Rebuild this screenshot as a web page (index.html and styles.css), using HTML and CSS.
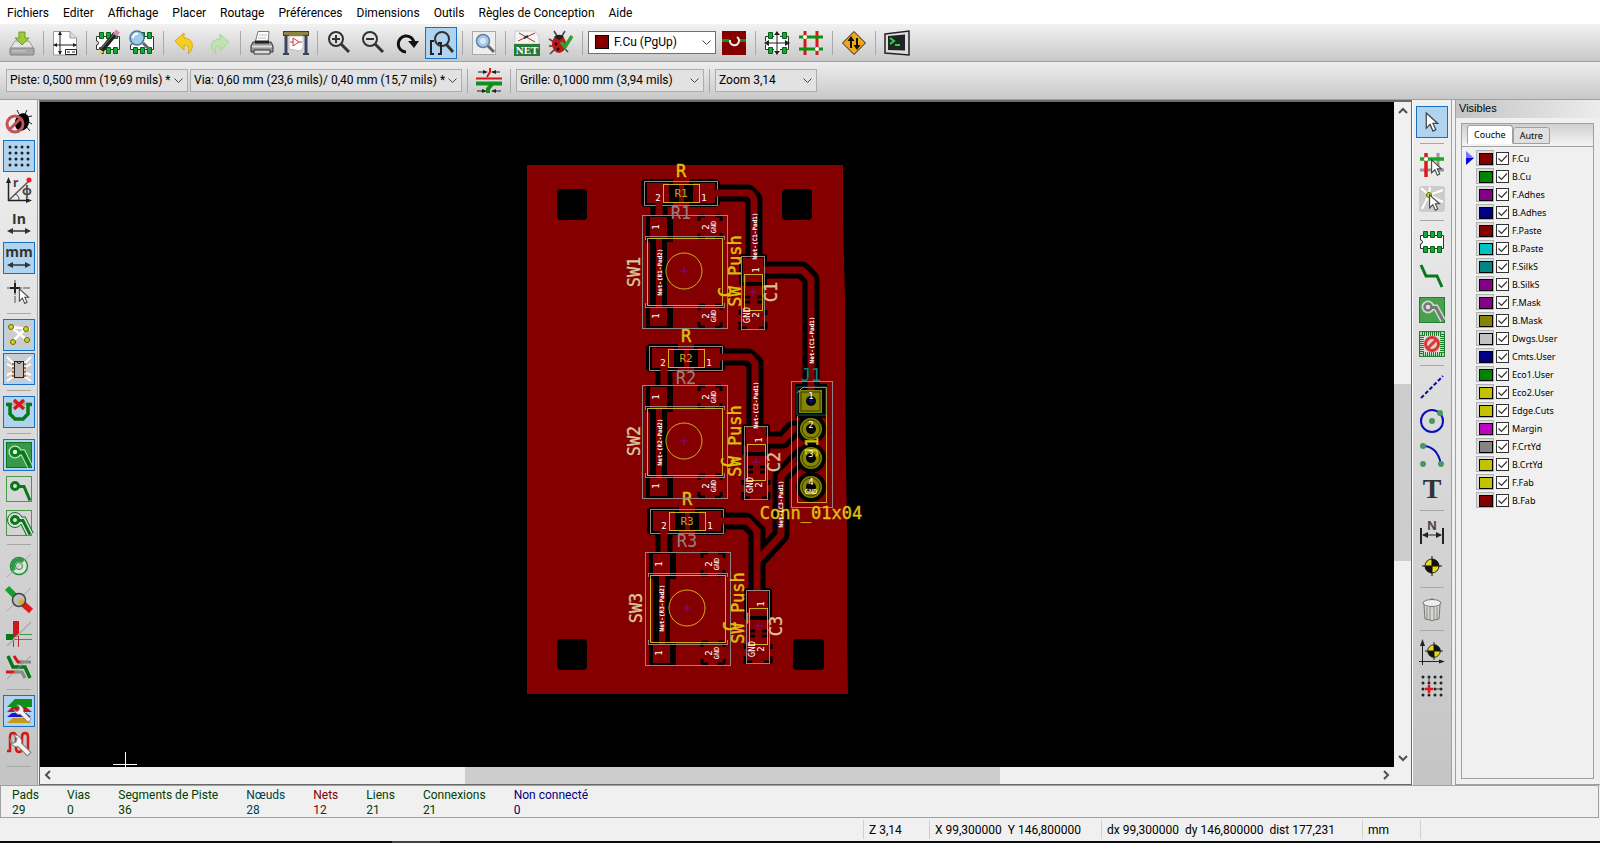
FILE: index.html
```html
<!DOCTYPE html>
<html lang="fr">
<head>
  <meta charset="UTF-8">
  <title>Pcbnew</title>
  <link rel="stylesheet" href="styles.css">
</head>
<body>
  <!-- shared shapes -->
  <svg class="defs" aria-hidden="true">
    <symbol id="i-cursor" viewBox="0 0 16 22"><path d="M2 1V17L6 13L9 20L12 18.500L9 12H14Z" fill="#fff" stroke="#444" stroke-width="1.300"/></symbol>
    <symbol id="i-chip" viewBox="0 0 26 26"><path d="M1.500 6.500H24.500V19.500H1.500V15a2 2 0 0 0 0-4Z" fill="#fff" stroke="#333"/><path d="M4.500 2.500h4v6h-4zM11.500 2.500h4v6h-4zM18.500 2.500h4v6h-4zM4.500 17.500h4v6h-4zM11.500 17.500h4v6h-4zM18.500 17.500h4v6h-4z" fill="#18a838" stroke="#086018"/></symbol>
    <symbol id="i-target" viewBox="0 0 20 20"><circle cx="10" cy="10" r="7" fill="#e4dc10" stroke="#222"/><path d="M10 10V3A7 7 0 0 1 17 10ZM10 10V17A7 7 0 0 1 3 10Z" fill="#111"/><path d="M10 0V20M0 10H20" stroke="#111"/></symbol>
    <symbol id="i-wrench" viewBox="0 0 20 20"><path d="M1 5a6 6 0 0 0 7 6l8 8 3-3-8-8a6 6 0 0 0-7-7l3 3-1 3-3 1Z" fill="#f2f2f2" stroke="#888"/></symbol>
    <symbol id="i-lens" viewBox="0 0 26 26"><path d="M14 14l8 8" stroke="#333" stroke-width="3"/><circle cx="9" cy="9" r="7" fill="none" stroke="#333" stroke-width="2"/></symbol>
  </svg>

  <nav class="menubar">
    <a href="#">Fichiers</a>
    <a href="#">Editer</a>
    <a href="#">Affichage</a>
    <a href="#">Placer</a>
    <a href="#">Routage</a>
    <a href="#">Préférences</a>
    <a href="#">Dimensions</a>
    <a href="#">Outils</a>
    <a href="#">Règles de Conception</a>
    <a href="#">Aide</a>
  </nav>

  <div class="toolbar toolbar-main">
    <button class="tool" aria-label="Sauver"><svg viewBox="0 0 26 26"><path d="M6 11H20L25 19H1Z" fill="#e4e4e4" stroke="#999"/><rect x="1" y="18" width="24" height="7" rx="1" fill="#a8a8a8" stroke="#808080"/><path d="M3 21h14" stroke="#ccc"/><path d="M10 2h6v6h4l-7 7-7-7h4z" fill="#9ccc3c" stroke="#6c9c20"/></svg></button>
    <i class="sep"></i>
    <button class="tool" aria-label="Page"><svg viewBox="0 0 26 26"><path d="M1.500 1.500H18L24.500 8V25H1.500Z" fill="#fff" stroke="#999"/><path d="M18 1.500V8H24.500" fill="#ddd" stroke="#999"/><path d="M8 2V24M2 15H24" stroke="#222"/><path d="M8 1l-2 4h4zM8 25l-2-4h4zM1 15l4-2v4zM25 15l-4-2v4z" fill="#222"/><path d="M13.500 19.500h11v5h-11z" fill="#fff" stroke="#222"/><path d="M15 22h3m2 0h3" stroke="#222"/></svg></button>
    <i class="sep"></i>
    <button class="tool" aria-label="Editeur d'empreintes"><svg viewBox="0 0 26 26"><use href="#i-chip"/><path d="M6 21L20 4" stroke="#222" stroke-width="5"/><path d="M20 5l3-4" stroke="#d888b0" stroke-width="5"/><path d="M4 25l0-6 5 3z" fill="#f0d060"/><path d="M6 19l13-15" stroke="#777"/></svg></button>
    <button class="tool" aria-label="Visualisateur d'empreintes"><svg viewBox="0 0 26 26"><use href="#i-chip"/><circle cx="8" cy="8" r="7" fill="#9ccce8" stroke="#4c7898" stroke-width="1.500"/><path d="M4 8a4 4 0 0 1 5-4" stroke="#fff" stroke-width="2" fill="none"/><path d="M14 13l6 6" stroke="#666" stroke-width="3"/></svg></button>
    <i class="sep"></i>
    <button class="tool" aria-label="Annuler"><svg viewBox="0 0 26 26"><path d="M12 3v5c8 0 12 9 4 16 2-7 0-9-4-9v5L3 11Z" fill="#f4d020" stroke="#d8a810"/></svg></button>
    <button class="tool" aria-label="Refaire"><svg viewBox="0 0 26 26"><path d="M14 4v5c-8 0-12 8-4 15-2-7 0-8 4-8v5l9-9Z" fill="#c0e4b0" stroke="#a8d498"/></svg></button>
    <i class="sep"></i>
    <button class="tool" aria-label="Imprimer"><svg viewBox="0 0 26 26"><path d="M6 13L9 1.500h11L19 13Z" fill="#fff" stroke="#777"/><path d="M10 5h8M9 8h8" stroke="#bbb"/><path d="M4 12H22L24 16V22H2V16Z" fill="#999" stroke="#333"/><path d="M6 12H20" stroke="#222" stroke-width="3"/><path d="M3 16.500H23" stroke="#ddd" stroke-width="2"/><path d="M5 20H21V24H5Z" fill="#ddd" stroke="#333"/></svg></button>
    <button class="tool" aria-label="Tracer"><svg viewBox="0 0 26 26"><path d="M3 4V24M23 4V24" stroke="#384460" stroke-width="3"/><path d="M0 24h6M20 24h6" stroke="#384460" stroke-width="2"/><rect x=".5" y="1.500" width="25" height="4" fill="#8c8440" stroke="#444020"/><path d="M6 6H20V18L17 21L6 19Z" fill="#fff" stroke="#bbb"/><path d="M10 8l6 4-6 4z" fill="none" stroke="#c83838"/><path d="M7 12h3m6 0h3" stroke="#c83838"/></svg></button>
    <i class="sep"></i>
    <button class="tool" aria-label="Zoom +"><svg viewBox="0 0 26 26"><use href="#i-lens" x="1" y="0" width="26" height="26"/><path d="M6 9h8M10 5v8" stroke="#333" stroke-width="2"/></svg></button>
    <button class="tool" aria-label="Zoom -"><svg viewBox="0 0 26 26"><use href="#i-lens" x="1" y="0" width="26" height="26"/><path d="M6 9h8" stroke="#333" stroke-width="2"/></svg></button>
    <button class="tool" aria-label="Redessiner"><svg viewBox="0 0 26 26"><path d="M12 22A8 8 0 1 1 20 12" fill="none" stroke="#111" stroke-width="3"/><path d="M14 11H25L20 18Z" fill="#111"/></svg></button>
    <button class="tool on" aria-label="Zoom automatique"><svg viewBox="0 0 26 26"><circle cx="14" cy="9" r="7" fill="none" stroke="#333" stroke-width="2"/><path d="M18 14l7 8" stroke="#333" stroke-width="3"/><path d="M6 11H3V24H6M10 13h3V24H10" fill="none" stroke="#222" stroke-width="2"/></svg></button>
    <i class="sep"></i>
    <button class="tool" aria-label="Chercher"><svg viewBox="0 0 26 26"><rect x="1.500" y="1.500" width="23" height="23" fill="#eee" stroke="#aaa"/><circle cx="12" cy="11" r="6.500" fill="#a8c8e8" stroke="#6080a8" stroke-width="1.500"/><circle cx="12" cy="11" r="3" fill="#d8e8f8"/><path d="M17 16l6 6" stroke="#666" stroke-width="3"/></svg></button>
    <i class="sep"></i>
    <button class="tool" aria-label="Netliste"><svg viewBox="0 0 26 26"><path d="M1 1H20L25 6V14H1Z" fill="#f4f4f4" stroke="#ccc"/><path d="M5 3l16 9M4 11L21 3" stroke="#a03028"/><path d="M10 8l4-2" stroke="#333" stroke-width="2"/><rect y="14" width="26" height="12" fill="#287838"/><text class="net-label" x="13" y="24" text-anchor="middle">NET</text></svg></button>
    <button class="tool" aria-label="Test des règles"><svg viewBox="0 0 26 26"><path d="M6 1l3 5M17 1l-3 5M1 9l5 3M1 16h5M2 24l5-5M20 22l-4-4" stroke="#444" stroke-width="1.500"/><ellipse cx="11" cy="14" rx="7" ry="9" fill="#c01818"/><path d="M6 7a6 5 0 0 1 10 0l-5 3Z" fill="#222"/><circle cx="8" cy="14" r="1.500"/><circle cx="10" cy="19" r="1.500"/><path d="M13 12l4 5 7-11" fill="none" stroke="#30a030" stroke-width="3.500"/></svg></button>
    <i class="sep"></i>
    <div class="combo combo-layer">
      <i class="combo-swatch"></i>
      <select aria-label="Couche active"><option>F.Cu (PgUp)</option></select>
    </div>
    <button class="tool" aria-label="Paire de couches"><svg viewBox="0 0 26 26"><rect x="1" y="1" width="24" height="24" fill="#840000"/><path d="M1 10.500h7M18 10.500h7" stroke="#189018" stroke-width="3"/><path d="M9 10a4.500 4.500 0 1 0 7-3" fill="none" stroke="#eee" stroke-width="2"/></svg></button>
    <i class="sep"></i>
    <button class="tool" aria-label="Mode module"><svg viewBox="0 0 26 26"><use href="#i-chip"/><rect x="2" y="9" width="22" height="8" fill="#fff"/><rect x="10" y="2" width="6" height="22" fill="#fff"/><path d="M13 3V23M2 13H24" stroke="#222"/><path d="M13 1l-3 4h6zM13 25l-3-4h6zM0 13l5-3v6zM26 13l-5-3v6z" fill="#222"/></svg></button>
    <button class="tool" aria-label="Mode piste"><svg viewBox="0 0 26 26"><path d="M7 1V25M19 1V25" stroke="#d81818" stroke-width="3"/><path d="M1 7H25M1 19H25" stroke="#109010" stroke-width="3"/><circle cx="7" cy="7" r="2" fill="#fff"/><circle cx="19" cy="19" r="2" fill="#fff"/></svg></button>
    <i class="sep"></i>
    <button class="tool" aria-label="FreeRoute"><svg viewBox="0 0 26 26"><path d="M13 1.500L24.500 13 13 24.500 1.500 13Z" fill="#f0a818" stroke="#222" stroke-linejoin="round"/><path d="M10 18V10M16 8V16" stroke="#111" stroke-width="2"/><path d="M10 6l-3.500 5h7zM16 20l-3.500-5h7z" fill="#111"/></svg></button>
    <i class="sep"></i>
    <button class="tool" aria-label="Console Python"><svg viewBox="0 0 26 26"><path d="M1 4L25 1V25L1 23Z" fill="#ddd" stroke="#222" stroke-width="1.500"/><path d="M4 6L21 4.500V20.500L4 20Z" fill="#1c2424"/><path d="M6 8l4 3-4 3M11 15h5" fill="none" stroke="#30d050" stroke-width="2"/></svg></button>
  </div>

  <div class="toolbar toolbar-aux">
    <div class="combo combo-track"><select aria-label="Piste"><option>Piste: 0,500 mm (19,69 mils) *</option></select></div>
    <div class="combo combo-via"><select aria-label="Via"><option>Via: 0,60 mm (23,6 mils)/ 0,40 mm (15,7 mils) *</option></select></div>
    <i class="sep"></i>
    <button class="tool" aria-label="Largeur automatique"><svg viewBox="0 0 26 26"><path d="M0 10.500H26" stroke="#d01818" stroke-width="2"/><path d="M0 15.500H26" stroke="#109018" stroke-width="4"/><path d="M14 0v4l-3 5" fill="none" stroke="#d01818" stroke-width="2"/><path d="M12 25v-4l4-5" fill="none" stroke="#109018" stroke-width="4"/><path d="M2 4h8M16 4h8M1 23h8M17 23h8" stroke="#222"/><path d="M12 4L7 2v4zM15 4l5-2v4zM11 23l-5-2v4zM15 23l5-2v4z" fill="#222"/></svg></button>
    <i class="sep"></i>
    <div class="combo combo-grid"><select aria-label="Grille"><option>Grille: 0,1000 mm (3,94 mils)</option></select></div>
    <i class="sep"></i>
    <div class="combo combo-zoom"><select aria-label="Zoom"><option>Zoom 3,14</option></select></div>
  </div>

  <main class="workspace">
    <div class="toolbar toolbar-side">
      <button class="tool" aria-label="DRC désactivé"><svg viewBox="0 0 26 26"><path d="M11 1l2 4M21 1l-2 4M20 8l6-1M21 12l5 3M20 17l4 5" stroke="#222"/><ellipse cx="16" cy="13" rx="7" ry="9" transform="rotate(20 16 13)"/><circle cx="9" cy="15" r="8" fill="none" stroke="#c85058" stroke-width="3"/><path d="M4 20L14 10" stroke="#c85058" stroke-width="3"/></svg></button>
      <button class="tool on" aria-label="Grille"><svg viewBox="0 0 26 26"><path d="M4 4h20M4 10h20M4 16h20M4 22h20" stroke="#222" stroke-width="3" stroke-linecap="round" stroke-dasharray="0 6"/></svg></button>
      <button class="tool" aria-label="Coordonnées polaires"><svg viewBox="0 0 26 26"><path d="M2.500 24V3M2 23.500H23" stroke="#222" stroke-width="1.500"/><path d="M2.500 0L0 6h5zM26 23.500L20 21v5z" fill="#222"/><path d="M3 23L23 4" stroke="#555" stroke-width="1.500"/><path d="M9 17a6 6 0 0 1 4 6" fill="none" stroke="#444"/><circle cx="23" cy="3" r="2.500" fill="#f01828"/><text class="glyph" x="7" y="10">r</text><text class="glyph" x="16" y="18">φ</text></svg></button>
      <button class="tool" aria-label="Pouces"><svg viewBox="0 0 26 26"><text class="unit" x="13" y="13" text-anchor="middle">In</text><path d="M3 20H23" stroke="#333" stroke-width="1.500"/><path d="M1 20l6-3v6zM25 20l-6-3v6z" fill="#333"/></svg></button>
      <button class="tool on" aria-label="Millimètres"><svg viewBox="0 0 26 26"><text class="unit" x="13" y="12" text-anchor="middle">mm</text><path d="M3 20H23" stroke="#333" stroke-width="1.500"/><path d="M1 20l6-3v6zM25 20l-6-3v6z" fill="#333"/></svg></button>
      <button class="tool" aria-label="Curseur"><svg viewBox="0 0 26 26"><path d="M9 1V25M1 9H25" stroke="#999" stroke-width="2" stroke-dasharray="7 1"/><path d="M9 4V14M4 9H14" stroke="#222" stroke-width="2"/><use href="#i-cursor" x="11" y="9" width="14" height="17"/></svg></button>
      <i class="sep"></i>
      <button class="tool on" aria-label="Chevelu"><svg viewBox="0 0 26 26"><rect width="26" height="26" fill="#ccc"/><path d="M5 5L24 7M5 5L21 18M20 6L6 20" stroke="#fff" stroke-width="2.500"/><g fill="#c8d820" stroke="#606810"><circle cx="5" cy="5" r="2.500"/><circle cx="20" cy="7" r="2.500"/><circle cx="21" cy="18" r="2.500"/><circle cx="7" cy="20" r="2.500"/></g></svg></button>
      <button class="tool on" aria-label="Chevelu du module"><svg viewBox="0 0 26 26"><rect width="26" height="26" fill="#ccc"/><path d="M8 8L1 1M8 12L1 8M8 16L1 19M8 20L1 25M18 8L25 1M18 12L25 8M18 16L25 19M18 20L25 25" stroke="#fff" stroke-width="2"/><path d="M6 8h14M6 12h14M6 16h14M6 20h14" stroke="#b87040" stroke-width="2"/><rect x="8.500" y="5.500" width="9" height="16" fill="#bbb" stroke="#222"/><path d="M11 5.500a2 2 0 0 0 4 0" fill="none" stroke="#222"/></svg></button>
      <i class="sep"></i>
      <button class="tool on" aria-label="Effacement automatique"><svg viewBox="0 0 26 26"><path d="M1 5H25" stroke="#aaa" stroke-width="3"/><path d="M0 5.500H4V15l5 5h8l5-5V5.500h4" fill="none" stroke="#087818" stroke-width="3.500"/><path d="M8 1l10 9M18 1L8 10" stroke="#d81818" stroke-width="3.500"/></svg></button>
      <i class="sep"></i>
      <button class="tool on" aria-label="Zones remplies"><svg viewBox="0 0 26 26"><rect x=".5" y=".5" width="25" height="25" fill="#389848" stroke="#087818"/><path d="M9 10.500h8l7 14" fill="none" stroke="#e0f0e0" stroke-width="6"/><circle cx="9" cy="10" r="6.500" fill="#e0f0e0"/><path d="M9 10.500h8l7 14" fill="none" stroke="#389848" stroke-width="4.500"/><circle cx="9" cy="10" r="5.500" fill="#389848"/><path d="M9 10.500h8l7 14" fill="none" stroke="#087818" stroke-width="3"/><circle cx="9" cy="10" r="3.500" fill="#e0f0e0" stroke="#087818" stroke-width="2.500"/></svg></button>
      <button class="tool" aria-label="Zones vides"><svg viewBox="0 0 26 26"><rect x=".5" y=".5" width="25" height="25" fill="none" stroke="#489848"/><path d="M9 10.500h9l6 14" fill="none" stroke="#087818" stroke-width="3"/><circle cx="9" cy="10" r="3.500" fill="#ddd" stroke="#087818" stroke-width="3"/></svg></button>
      <button class="tool" aria-label="Contours des zones"><svg viewBox="0 0 26 26"><rect x=".5" y=".5" width="25" height="25" fill="none" stroke="#489848"/><path d="M9 10.500h8l7 14" fill="none" stroke="#087818" stroke-width="8"/><circle cx="9" cy="10" r="7.500" fill="#ddd" stroke="#087818"/><path d="M9 10.500h8l7 14" fill="none" stroke="#ddd" stroke-width="6"/><path d="M9 10.500h8l7 14" fill="none" stroke="#087818" stroke-width="3"/><circle cx="9" cy="10" r="3.500" fill="#ddd" stroke="#087818" stroke-width="3"/></svg></button>
      <i class="sep"></i>
      <button class="tool" aria-label="Pastilles en contour"><svg viewBox="0 0 26 26"><circle cx="13" cy="13" r="8.500" fill="#d8e8d8" stroke="#208838" stroke-width="1.500"/><path d="M7 19A8.500 8.500 0 0 1 19 7L16 10A4 4 0 0 0 10 16Z" fill="#309848"/><circle cx="13" cy="13" r="3.500" fill="#ddd" stroke="#208838"/><path d="M1 24L25 1" stroke="#aaa"/></svg></button>
      <button class="tool" aria-label="Vias en contour"><svg viewBox="0 0 26 26"><path d="M1 1L9 9" stroke="#18a028" stroke-width="6"/><path d="M14 14L25 24" stroke="#e01818" stroke-width="6"/><path d="M1 24L25 1" stroke="#aaa"/><circle cx="13" cy="13" r="6.500" fill="#bbb" fill-opacity=".8" stroke="#444" stroke-width="1.500"/><circle cx="15" cy="15" r="2.500" fill="#d8b018"/></svg></button>
      <button class="tool" aria-label="Pistes en contour"><svg viewBox="0 0 26 26"><path d="M0 16h7" stroke="#087818" stroke-width="6"/><path d="M7 13.500h19M7 18.500h19" stroke="#389848"/><path d="M10 0V16" stroke="#d01818" stroke-width="6"/><path d="M7.500 16v10M12.500 16v10" stroke="#c02828"/><path d="M1 25L25 1" stroke="#aaa" stroke-width="1.500"/></svg></button>
      <button class="tool" aria-label="Haut contraste"><svg viewBox="0 0 26 26"><path d="M8 1l4 6h4" fill="none" stroke="#d01818" stroke-width="3"/><path d="M14 7h11M9 17h7l3 6" fill="none" stroke="#888" stroke-width="3"/><path d="M0 17h9" stroke="#d01818" stroke-width="3"/><path d="M2 1l5 11h12l5 11" fill="none" stroke="#087818" stroke-width="3.500"/><path d="M1 24L25 1" stroke="#999"/></svg></button>
      <i class="sep"></i>
      <button class="tool on" aria-label="Gestionnaire des couches"><svg viewBox="0 0 26 26"><path d="M7 20h13l5 5H1z" fill="#c89818"/><path d="M6 15h14l5 4H1z" fill="#1818d0"/><path d="M6 9h14l6 5H1z" fill="#c01828"/><path d="M9 1h17V9H1z" fill="#109018"/><use href="#i-wrench" x="7" y="5" width="19" height="21"/></svg></button>
      <button class="tool" aria-label="Outils micro-ondes"><svg viewBox="0 0 26 26"><path d="M1 19h3V5q0-4 3-4t3 4V16q0 4 3 4t3-4V5q0-4 3-4t3 4V19" fill="none" stroke="#d01818" stroke-width="2.500"/><use href="#i-wrench" x="3" y="2" width="23" height="23"/></svg></button>
      <i class="sep"></i>
    </div>

    <section class="view">
      <div class="view-row">
        <svg class="board" viewBox="40 102 1354 665" role="img" aria-label="Circuit imprimé">
          <defs>
            <g id="fp-r">
              <path class="gap" d="M-40-11l3-3h29v28h-29l-3-3zM8-14h27l4 3v22l-4 3H8z"/>
              <path class="cu" d="M-34-10h22v20h-22zM12-10h22v20H12z"/>
              <path class="gap" d="M-9-9h7v18h-7zM3-9h6v18H3z"/>
              <rect class="crtyd" x="-37" y="-12" width="73" height="24"/>
              <rect class="fab" x="-18" y="-9" width="36" height="18"/>
              <text class="value" x="0" y="-16">R</text>
              <text class="pad" x="-23" y="8">2</text>
              <text class="pad" x="23" y="8">1</text>
            </g>
            <g id="fp-sw">
              <path class="gap" d="M-38-55h27v26h-27zM-38 34h27v23h-27z"/>
              <path class="gap" d="M-34-34h17v72h-17z"/>
              <path class="cu" d="M-34-54h17v21h-17zM-34 36h17v19h-17zM-28-34h6v72h-6z"/>
              <path class="relief" d="M15-55h6M31-55h6M15-33h6M31-33h6M15-50v-5M15-38v5M37-50v-5M37-38v5M15 34h6M31 34h6M15 56h6M31 56h6M15 39v-5M15 51v5M37 39v-5M37 51v5"/>
              <rect class="crtyd" x="-42" y="-56" width="85" height="113"/>
              <path class="crtyd" d="M-39-31v-4H40v4M-39 32v4H40v-4"/>
              <rect class="fab" x="-37" y="-33" width="75" height="67"/>
              <circle class="fab" r="18"/>
              <path class="anchor" d="M-4 0H4M0-4V4"/>
              <g transform="rotate(-90)">
                <text class="value" x="0" y="57">SW_Push</text>
                <text class="pad" x="44" y="-25">1</text>
                <text class="pad" x="-45" y="-25">1</text>
                <text class="pad" x="44" y="25">2</text>
                <text class="pad" x="-45" y="25">2</text>
                <text class="gnd" x="44" y="32">GND</text>
                <text class="gnd" x="-45" y="32">GND</text>
              </g>
            </g>
            <g id="fp-c-cu">
              <rect class="gap" x="-14" y="-38" width="28" height="32" rx="3"/>
              <rect class="cu" x="-10" y="-35" width="20" height="25"/>
              <path class="relief" d="M-9 5h6M4 5h6M-9 10h6M4 10h6M-13 30v6h7M13 30v6H6M-13 18v5M13 18v5"/>
            </g>
            <g id="fp-c">
              <rect class="crtyd" x="-12" y="-36" width="23" height="73"/>
              <rect class="fab" x="-9" y="-18" width="18" height="36"/>
              <path class="anchor" d="M-4 0H4M0-4V4"/>
              <g transform="rotate(-90)">
                <text class="value" x="0" y="-22">C</text>
                <text class="pad" x="22" y="6">1</text>
                <text class="pad" x="-23" y="6">2</text>
                <text class="pad" x="-23" y="-3">GND</text>
              </g>
            </g>
            <g id="pad-round"><circle class="gap" r="15"/><circle class="hole-pad" r="11"/><circle class="ring" r="9"/><circle class="gap" r="5"/></g>
          </defs>

          <path class="cu" d="M527 165H843V220L845 300V400L847 530V640L848 694H527Z"/>
          <g class="gap">
            <rect x="557" y="189" width="30" height="31" rx="4"/>
            <rect x="782" y="189" width="30" height="31" rx="4"/>
            <rect x="557" y="639" width="30" height="31" rx="4"/>
            <rect x="793" y="639" width="31" height="31" rx="4"/>
          </g>

          <use href="#fp-r" x="681" y="193"/>
          <use href="#fp-r" x="686" y="358"/>
          <use href="#fp-r" x="687" y="521"/>
          <rect class="gap" x="795" y="384" width="32" height="34"/>

          <use href="#fp-c-cu" x="753" y="292"/>
          <use href="#fp-c-cu" x="756" y="462"/>
          <use href="#fp-c-cu" x="758" y="626"/>
          <g class="clearance">
            <path d="M718 193H748L754 199V258"/>
            <path d="M766 270H802L811 279V395"/>
            <path d="M723 357H748L755 363V425"/>
            <path d="M769 440H783L793 429H811"/>
            <path d="M811 455H802L781 476V535L757 561"/>
            <path d="M724 521H746L757 531V590"/>
            <path d="M659 206V222M664 371V390M664 534V556"/>
          </g>
          <g class="track">
            <path d="M712 193H750L754 199V266"/>
            <path d="M755 270H802L811 279V400"/>
            <path d="M716 357H750L755 363V432"/>
            <path d="M758 440H783L793 429H811"/>
            <path d="M811 455H802L781 476V535L757 561"/>
            <path d="M717 521H748L757 531V600"/>
            <path d="M659 203V226M664 368V394M664 531V560"/>
          </g>

          <use href="#fp-sw" x="684" y="271"/>
          <use href="#fp-sw" x="684" y="441"/>
          <use href="#fp-sw" x="687" y="608"/>
          <use href="#fp-c" x="753" y="292"/>
          <use href="#fp-c" x="756" y="462"/>
          <use href="#fp-c" x="758" y="626"/>

          <!-- J1 connector -->
          <use href="#pad-round" x="811" y="429"/>
          <use href="#pad-round" x="811" y="458"/>
          <use href="#pad-round" x="811" y="487"/>
          <rect class="hole-pad" x="799" y="390" width="23" height="23"/>
          <rect class="ring" x="801" y="392" width="19" height="19"/>
          <circle class="gap" cx="811" cy="401" r="5"/>
          <path class="anchor-b" d="M807 401h8M811 397v8"/>
          <rect class="crtyd" x="791" y="381" width="41" height="126"/>
          <path class="fab-l" d="M797 416V502H826V387H803L797 393"/>
          <path class="silk" d="M797 415H826V387H797Z"/>
          <text class="ref-b" x="811" y="381">J1</text>
          <text class="value" x="0" y="0" transform="translate(818 447) rotate(-90)">J1</text>
          <text class="pad" x="811" y="399">1</text>
          <text class="pad" x="811" y="428">2</text>
          <text class="pad" x="811" y="457">3</text>
          <text class="pad" x="811" y="485">4</text>
          <text class="gnd" x="811" y="494">GND</text>
          <text class="value" x="811" y="519">Conn_01x04</text>

          <!-- references -->
          <text class="fab-ref" x="681" y="197">R1</text>
          <text class="fab-ref" x="686" y="362">R2</text>
          <text class="fab-ref" x="687" y="525">R3</text>
          <text class="ref-r" x="681" y="219">R1</text>
          <text class="ref-r" x="686" y="384">R2</text>
          <text class="ref-r" x="687" y="547">R3</text>
          <g transform="rotate(-90)">
            <text class="ref" x="-272" y="640">SW1</text>
            <text class="ref" x="-441" y="640">SW2</text>
            <text class="ref" x="-608" y="642">SW3</text>
            <text class="ref" x="-292" y="777">C1</text>
            <text class="ref" x="-462" y="780">C2</text>
            <text class="ref" x="-626" y="782">C3</text>
            <text class="net" x="-272" y="662">Net-(R1-Pad2)</text>
            <text class="net" x="-442" y="662">Net-(R2-Pad2)</text>
            <text class="net" x="-608" y="664">Net-(R3-Pad2)</text>
            <text class="net" x="-236" y="757">Net-(C1-Pad1)</text>
            <text class="net" x="-340" y="814">Net-(C1-Pad1)</text>
            <text class="net" x="-405" y="758">Net-(C2-Pad1)</text>
            <text class="net" x="-504" y="783">Net-(C3-Pad1)</text>
          </g>
          <path class="crosshair" d="M113 764.500H137M125.500 752V767"/>
        </svg>
        <div class="scroll scroll-v">
          <svg viewBox="0 0 17 17"><path d="M5 11l4-4 4 4"/></svg>
          <i class="track-a"></i><i class="thumb"></i><i class="track-b"></i>
          <svg viewBox="0 0 17 17"><path d="M5 6l4 4 4-4"/></svg>
        </div>
      </div>
      <div class="scroll scroll-h">
        <svg viewBox="0 0 17 17"><path d="M10 4L6 8l4 4"/></svg>
        <i class="track-a"></i><i class="thumb"></i><i class="track-b"></i>
        <svg viewBox="0 0 17 17"><path d="M7 4l4 4-4 4"/></svg>
      </div>
    </section>

    <div class="toolbar toolbar-side toolbar-right">
      <button class="tool on" aria-label="Sélection"><svg viewBox="0 0 26 26"><use href="#i-cursor" x="5" y="3" width="16" height="21"/></svg></button>
      <i class="sep"></i>
      <button class="tool" aria-label="Surbrillance net"><svg viewBox="0 0 26 26"><path d="M19 1V22M1 18H25" stroke="#999" stroke-width="3"/><path d="M7 1V25" stroke="#e01818" stroke-width="3.500"/><path d="M1 7H25" stroke="#18a828" stroke-width="3.500"/><circle cx="7" cy="7" r="2" fill="#fff"/><use href="#i-cursor" x="11" y="7" width="13" height="18"/></svg></button>
      <button class="tool" aria-label="Chevelu local"><svg viewBox="0 0 26 26"><rect width="26" height="26" rx="3" fill="#ccc"/><path d="M10 9L2 2M10 9L24 4M10 9L3 23M10 9l1-8M10 9l14 7" stroke="#fff" stroke-width="2"/><circle cx="10" cy="9" r="2.500" fill="#c8d820" stroke="#606810"/><use href="#i-cursor" x="9" y="8" width="13" height="18"/></svg></button>
      <i class="sep"></i>
      <button class="tool" aria-label="Ajouter module"><svg viewBox="0 0 26 26"><use href="#i-chip"/></svg></button>
      <button class="tool" aria-label="Ajouter piste"><svg viewBox="0 0 26 26"><path d="M2 2l5 11h11l5 11" fill="none" stroke="#087818" stroke-width="3"/></svg></button>
      <button class="tool" aria-label="Ajouter zone"><svg viewBox="0 0 26 26"><rect x=".5" y=".5" width="25" height="25" fill="#48a050" stroke="#208030"/><path d="M9 10.500h8l7 13" fill="none" stroke="#d0d8d0" stroke-width="6"/><circle cx="9" cy="10" r="6.500" fill="#d0d8d0"/><path d="M9 10.500h8l7 13" fill="none" stroke="#777" stroke-width="3"/><circle cx="9" cy="10" r="3.500" fill="#ddd" stroke="#777" stroke-width="2.500"/></svg></button>
      <button class="tool" aria-label="Zone interdite"><svg viewBox="0 0 26 26"><rect x=".5" y=".5" width="25" height="25" fill="#b0d8b0" stroke="#208030"/><rect x="3" y="3" width="20" height="20" fill="#ddd" stroke="#208030" stroke-width="4" stroke-dasharray="1 1"/><circle cx="13" cy="13" r="6.500" fill="#f0c8c8" stroke="#d83838" stroke-width="3"/><path d="M9 17l8-8" stroke="#d83838" stroke-width="3"/></svg></button>
      <i class="sep"></i>
      <button class="tool" aria-label="Ligne"><svg viewBox="0 0 26 26"><path d="M2 24L24 2" stroke="#0810b8" stroke-width="2" stroke-dasharray="4 2"/></svg></button>
      <button class="tool" aria-label="Cercle"><svg viewBox="0 0 26 26"><circle cx="13" cy="13" r="11" fill="none" stroke="#0810b8" stroke-width="2"/><circle cx="13" cy="13" r="3" fill="#489860"/><circle cx="21" cy="5" r="3" fill="#489860"/></svg></button>
      <button class="tool" aria-label="Arc"><svg viewBox="0 0 26 26"><path d="M4 4Q18 4 22 22" fill="none" stroke="#0810b8" stroke-width="2"/><g fill="#489860"><circle cx="4" cy="4" r="3"/><circle cx="4" cy="22" r="3"/><circle cx="22" cy="22" r="3"/></g></svg></button>
      <button class="tool" aria-label="Texte"><svg viewBox="0 0 26 26"><text class="big-t" x="13" y="22" text-anchor="middle">T</text></svg></button>
      <i class="sep"></i>
      <button class="tool" aria-label="Cote"><svg viewBox="0 0 26 26"><path d="M2 9V25M24 9V25" stroke="#222" stroke-width="2"/><path d="M4 16H22" stroke="#222"/><path d="M3 16l6-3v6zM23 16l-6-3v6z" fill="#222"/><text class="dim-n" x="13" y="11" text-anchor="middle">N</text></svg></button>
      <button class="tool" aria-label="Mire"><svg viewBox="0 0 26 26"><use href="#i-target" x="3" y="3" width="20" height="20"/></svg></button>
      <i class="sep"></i>
      <button class="tool" aria-label="Supprimer"><svg viewBox="0 0 26 26"><path d="M5 9H21L20 23Q13 26 6 23Z" fill="#d8d8d0" stroke="#777"/><path d="M8 11v12M11 11v13M15 11v13M18 11v12" stroke="#888"/><ellipse cx="13" cy="7" rx="9" ry="3.500" fill="#eee" stroke="#777"/><path d="M11 4q2-3 4 0" fill="none" stroke="#777"/></svg></button>
      <i class="sep"></i>
      <button class="tool" aria-label="Origine"><svg viewBox="0 0 26 26"><path d="M3.500 26V4M0 22.500H22" stroke="#222"/><path d="M3.500 0L1 7h5zM26 22.500l-6-2v4z" fill="#222"/><use href="#i-target" x="6" y="3" width="18" height="18"/></svg></button>
      <button class="tool" aria-label="Origine grille"><svg viewBox="0 0 26 26"><path d="M4 4h20M4 10h20M4 16h20M4 22h20" stroke="#222" stroke-width="3" stroke-linecap="round" stroke-dasharray="0 6"/><path d="M10 12v8M6 16h8" stroke="#e01818" stroke-width="2.500"/><path d="M10 4v6M16 16h6" stroke="#444"/></svg></button>
    </div>

    <aside class="panel">
      <h2 class="panel-title">Visibles</h2>
      <div class="notebook">
        <div class="tabs">
          <button class="tab active">Couche</button>
          <button class="tab">Autre</button>
        </div>
        <ul class="layers">
          <li class="current"><button class="color red" aria-label="Couleur F.Cu"></button><label><input type="checkbox" checked>F.Cu</label></li>
          <li><button class="color green" aria-label="Couleur B.Cu"></button><label><input type="checkbox" checked>B.Cu</label></li>
          <li><button class="color purple" aria-label="Couleur F.Adhes"></button><label><input type="checkbox" checked>F.Adhes</label></li>
          <li><button class="color navy" aria-label="Couleur B.Adhes"></button><label><input type="checkbox" checked>B.Adhes</label></li>
          <li><button class="color red" aria-label="Couleur F.Paste"></button><label><input type="checkbox" checked>F.Paste</label></li>
          <li><button class="color cyan" aria-label="Couleur B.Paste"></button><label><input type="checkbox" checked>B.Paste</label></li>
          <li><button class="color teal" aria-label="Couleur F.SilkS"></button><label><input type="checkbox" checked>F.SilkS</label></li>
          <li><button class="color purple" aria-label="Couleur B.SilkS"></button><label><input type="checkbox" checked>B.SilkS</label></li>
          <li><button class="color purple" aria-label="Couleur F.Mask"></button><label><input type="checkbox" checked>F.Mask</label></li>
          <li><button class="color olive" aria-label="Couleur B.Mask"></button><label><input type="checkbox" checked>B.Mask</label></li>
          <li><button class="color silver" aria-label="Couleur Dwgs.User"></button><label><input type="checkbox" checked>Dwgs.User</label></li>
          <li><button class="color navy" aria-label="Couleur Cmts.User"></button><label><input type="checkbox" checked>Cmts.User</label></li>
          <li><button class="color green" aria-label="Couleur Eco1.User"></button><label><input type="checkbox" checked>Eco1.User</label></li>
          <li><button class="color yellow" aria-label="Couleur Eco2.User"></button><label><input type="checkbox" checked>Eco2.User</label></li>
          <li><button class="color yellow" aria-label="Couleur Edge.Cuts"></button><label><input type="checkbox" checked>Edge.Cuts</label></li>
          <li><button class="color magenta" aria-label="Couleur Margin"></button><label><input type="checkbox" checked>Margin</label></li>
          <li><button class="color gray" aria-label="Couleur F.CrtYd"></button><label><input type="checkbox" checked>F.CrtYd</label></li>
          <li><button class="color yellow" aria-label="Couleur B.CrtYd"></button><label><input type="checkbox" checked>B.CrtYd</label></li>
          <li><button class="color yellow" aria-label="Couleur F.Fab"></button><label><input type="checkbox" checked>F.Fab</label></li>
          <li><button class="color red" aria-label="Couleur B.Fab"></button><label><input type="checkbox" checked>B.Fab</label></li>
        </ul>
      </div>
    </aside>
  </main>

  <dl class="messages">
    <div><dt>Pads</dt><dd>29</dd></div>
    <div><dt>Vias</dt><dd>0</dd></div>
    <div><dt>Segments de Piste</dt><dd>36</dd></div>
    <div class="nodes"><dt>Nœuds</dt><dd>28</dd></div>
    <div class="nets"><dt>Nets</dt><dd>12</dd></div>
    <div><dt>Liens</dt><dd>21</dd></div>
    <div><dt>Connexions</dt><dd>21</dd></div>
    <div class="unconnected"><dt>Non connecté</dt><dd>0</dd></div>
  </dl>

  <footer class="status">
    <span class="st-fill"></span>
    <span class="st-zoom">Z 3,14</span>
    <span class="st-pos">X 99,300000&nbsp; Y 146,800000</span>
    <span class="st-delta">dx 99,300000&nbsp; dy 146,800000&nbsp; dist 177,231</span>
    <span class="st-unit">mm</span>
    <span class="st-last"></span>
  </footer>
  <div class="taskbar"></div>
</body>
</html>
```
FILE: styles.css
```css
* {
  box-sizing: border-box;
}
body {
  margin: 0;
  height: 100vh;
  display: flex;
  flex-direction: column;
  overflow: hidden;
  background: #f0f0f0;
  color: #000;
  font-family: Roboto, "Noto Sans", sans-serif;
  font-size: 12px;
  line-height: 15px;
}
button, select, input {
  font: inherit;
  color: inherit;
  margin: 0;
}
.defs {
  display: none;
}

/* menu */
.menubar {
  display: flex;
  align-items: center;
  gap: 14px;
  height: 24px;
  padding: 3px 7px 0;
  background: #fff;
  flex: none;
}
.menubar a {
  color: #000;
  text-decoration: none;
  white-space: nowrap;
}

/* toolbars */
.toolbar {
  display: flex;
  align-items: center;
  gap: 2px;
  flex: none;
}
.toolbar-main {
  height: 38px;
  padding: 0 6px;
  background: linear-gradient(#f2f2f2, #c8c8c8);
  border-bottom: 1px solid #a0a0a0;
}
.toolbar-aux {
  height: 38px;
  padding: 0 6px;
  background: linear-gradient(#eee, #c8c8c8);
  border-bottom: 1px solid #a0a0a0;
}
.tool {
  width: 32px;
  height: 32px;
  padding: 2px;
  border: 1px solid transparent;
  background: none;
  display: flex;
  align-items: center;
  justify-content: center;
  flex: none;
}
.tool.on {
  background: #b0d4f0;
  border-color: #1870c0;
}
.tool svg {
  width: 26px;
  height: 26px;
  display: block;
  overflow: visible;
}
.sep {
  width: 7px;
  height: 24px;
  flex: none;
  background: linear-gradient(#a8a8a8, #a8a8a8) center / 1px 100% no-repeat;
}
.toolbar-side {
  flex-direction: column;
  width: 38px;
  padding: 6px 0 0;
  background: linear-gradient(#f0f0f0, #c4c4c4);
  border-right: 1px solid #a0a0a0;
}
.toolbar-side .sep {
  width: 24px;
  height: 7px;
  background: linear-gradient(#a8a8a8, #a8a8a8) center / 100% 1px no-repeat;
}
.toolbar-right {
  width: 40px;
  border-left: 1px solid #fff;
}
.net-label {
  font: bold 11px "Liberation Serif", serif;
  fill: #fff;
}
.glyph {
  font: bold 12px "Noto Sans", sans-serif;
  fill: #444;
}
.unit {
  font: bold 14px "Open Sans", sans-serif;
  fill: #333;
}
.big-t {
  font: bold 28px "Liberation Serif", serif;
  fill: #333;
}
.dim-n {
  font: bold 13px "Liberation Sans", sans-serif;
  fill: #444;
}

/* drop-downs */
.combo {
  position: relative;
  height: 23px;
}
.combo select {
  appearance: none;
  width: 100%;
  height: 100%;
  padding: 0 14px 0 3px;
  border: 1px solid #adadad;
  border-radius: 0;
  background: #e2e2e2 url("data:image/svg+xml,%3Csvg xmlns='http://www.w3.org/2000/svg' width='9' height='6'%3E%3Cpath d='M.5 .5L4.500 4.500L8.500 .5' fill='none' stroke='%23444'/%3E%3C/svg%3E") right 4px center no-repeat;
}
.combo-track {
  width: 182px;
}
.combo-via {
  width: 272px;
}
.combo-grid {
  width: 188px;
}
.combo-zoom {
  width: 102px;
}
.combo-layer {
  width: 128px;
}
.combo-layer select {
  padding-left: 25px;
  border-color: #707070;
  background-color: #fff;
}
.combo-swatch {
  position: absolute;
  left: 7px;
  top: 4px;
  width: 14px;
  height: 14px;
  background: #840000;
  border: 1px solid #000;
}

/* work area */
.workspace {
  display: flex;
  flex: 1;
  min-height: 0;
}
.view {
  flex: 1;
  min-width: 0;
  display: flex;
  flex-direction: column;
  margin-left: 1px;
  border: 1px solid #696969;
  border-top-width: 2px;
}
.view-row {
  display: flex;
  flex: 1;
  min-height: 0;
}
.board {
  flex: 1;
  min-width: 0;
  height: 100%;
  background: #000;
}
.scroll {
  display: flex;
  background: #f0f0f0;
  flex: none;
}
.scroll svg {
  width: 17px;
  height: 17px;
  fill: none;
  stroke: #505050;
  stroke-width: 2;
}
.scroll-v {
  flex-direction: column;
  width: 17px;
}
.scroll-h {
  height: 17px;
  padding-right: 17px;
}
.thumb {
  background: #cdcdcd;
}
.scroll-v .track-a {
  flex: 265;
}
.scroll-v .thumb {
  flex: 178;
}
.scroll-v .track-b {
  flex: 189;
}
.scroll-h .track-a {
  flex: 408;
}
.scroll-h .thumb {
  flex: 535;
}
.scroll-h .track-b {
  flex: 377;
}

/* board drawing */
.cu {
  fill: #840000;
}
.gap {
  fill: #000;
}
.relief {
  fill: none;
  stroke: #000;
  stroke-width: 3;
}
.clearance {
  fill: none;
  stroke: #000;
  stroke-width: 17;
  stroke-linejoin: round;
}
.track {
  fill: none;
  stroke: #840000;
  stroke-width: 7;
  stroke-linejoin: round;
}
.crtyd {
  fill: none;
  stroke: #948484;
  shape-rendering: crispEdges;
}
.fab {
  fill: none;
  stroke: #d0b020;
}
.fab-l {
  fill: none;
  stroke: #d0a028;
}
.silk {
  fill: none;
  stroke: #108080;
  stroke-opacity: 0.7;
}
rect.fab, .fab-l {
  shape-rendering: crispEdges;
}
.hole-pad {
  fill: #848400;
}
.ring {
  fill: none;
  stroke: #383800;
}
.anchor {
  stroke: #800890;
  fill: none;
}
.anchor-b {
  stroke: #1010a0;
  fill: none;
}
.board text {
  font-family: "DejaVu Sans Mono", monospace;
  text-anchor: middle;
}
.value {
  font-size: 17px;
  fill: #dcc010;
  stroke: #dcc010;
  stroke-width: 0.4;
}
.ref {
  font-size: 17px;
  fill: #dcc49c;
  stroke: #dcc49c;
  stroke-width: 0.3;
}
.ref-r {
  font-size: 17px;
  fill: #988080;
}
.ref-b {
  font-size: 17px;
  fill: #108080;
}
.fab-ref {
  font-size: 11px;
  fill: #d0a018;
}
.pad {
  font-size: 9px;
  fill: #fff;
}
.gnd {
  font-size: 7px;
  fill: #fff;
}
.net {
  font-size: 6px;
  font-weight: bold;
  fill: #fff;
}
.crosshair {
  stroke: #fff;
}

/* layer panel */
.panel {
  width: 145px;
  margin-left: 3px;
  display: flex;
  flex-direction: column;
  flex: none;
  border-left: 1px solid #a0a0a0;
  border-bottom: 1px solid #a0a0a0;
}
.panel-title {
  margin: 0;
  height: 18px;
  padding: 0 3px;
  font: 11px/16px "Liberation Sans", sans-serif;
  background: linear-gradient(90deg, #c4c4c4, #ececec);
}
.notebook {
  flex: 1;
  margin: 5px 6px 5px 5px;
  border: 1px solid #a0a0a0;
}
.tabs {
  display: flex;
  align-items: flex-end;
  height: 23px;
  padding: 0 5px 2px;
  background: linear-gradient(#cfcfcf, #f4f4f4);
  border-bottom: 1px solid #a0a0a0;
}
.tab {
  height: 17px;
  padding: 0 6px;
  border: 1px solid #a0a0a0;
  border-radius: 3px 3px 0 0;
  background: #e0e0e0;
  font: 9px/15px "Noto Sans", sans-serif;
}
.tab.active {
  height: 19px;
  background: #fff;
  border-bottom-color: #fff;
}
.layers {
  list-style: none;
  margin: 0;
  padding: 2px 0 0 14px;
}
.layers li {
  position: relative;
  display: flex;
  align-items: center;
  gap: 2px;
  height: 18px;
}
.current::before {
  content: "";
  position: absolute;
  left: -10px;
  top: 2px;
  width: 8px;
  height: 14px;
  background: linear-gradient(#7878f0 50%, #0808d8 50%);
  clip-path: polygon(0 0, 100% 50%, 0 100%);
}
.layers label {
  display: flex;
  align-items: center;
  gap: 3px;
  font: 9px/15px "Noto Sans", sans-serif;
}
.layers input {
  appearance: none;
  width: 13px;
  height: 13px;
  border: 1px solid #333;
  background: #fff url("data:image/svg+xml,%3Csvg xmlns='http://www.w3.org/2000/svg' width='11' height='11'%3E%3Cpath d='M1.500 5.500L4.500 8.500L10 2.500' fill='none' stroke='%23333' stroke-width='1.200'/%3E%3C/svg%3E") center no-repeat;
}
.color {
  width: 18px;
  height: 16px;
  padding: 2px;
  border: 1px solid #b0b0b0;
  background: #dcdcdc;
}
.color::before {
  content: "";
  display: block;
  width: 12px;
  height: 10px;
  border: 1px solid #000;
}
.red::before {
  background: #840000;
}
.green::before {
  background: #008400;
}
.purple::before {
  background: #840084;
}
.navy::before {
  background: #000084;
}
.cyan::before {
  background: #00c2c2;
}
.teal::before {
  background: #008484;
}
.olive::before {
  background: #848400;
}
.silver::before {
  background: #c2c2c2;
}
.yellow::before {
  background: #c2c200;
}
.magenta::before {
  background: #c200c2;
}
.gray::before {
  background: #848484;
}

/* message panel */
.messages {
  display: flex;
  gap: 28px;
  height: 33px;
  margin: 0 1px 0 0;
  padding: 2px 11px 0;
  border: 1px solid #a0a0a0;
  color: #004000;
  flex: none;
}
.messages dd {
  margin: 0;
}
.nodes {
  color: #004050;
}
.nets {
  color: #800000;
}
.unconnected {
  color: #000080;
}

/* status bar */
.status {
  display: flex;
  height: 23px;
  padding: 2px 0;
  line-height: 21px;
  flex: none;
}
.status span {
  padding-left: 5px;
  border-left: 1px solid #d0d0d0;
  white-space: nowrap;
}
.st-fill {
  flex: 1;
}
.status .st-fill {
  border-left: none;
}
.st-zoom {
  width: 66px;
}
.st-pos {
  width: 172px;
}
.st-delta {
  width: 261px;
}
.st-unit {
  width: 58px;
}
.st-last {
  width: 180px;
}
.taskbar {
  height: 2px;
  background: linear-gradient(#444, #444) 392px 0 / 48px 2px no-repeat #0a0c14;
  flex: none;
}
```
